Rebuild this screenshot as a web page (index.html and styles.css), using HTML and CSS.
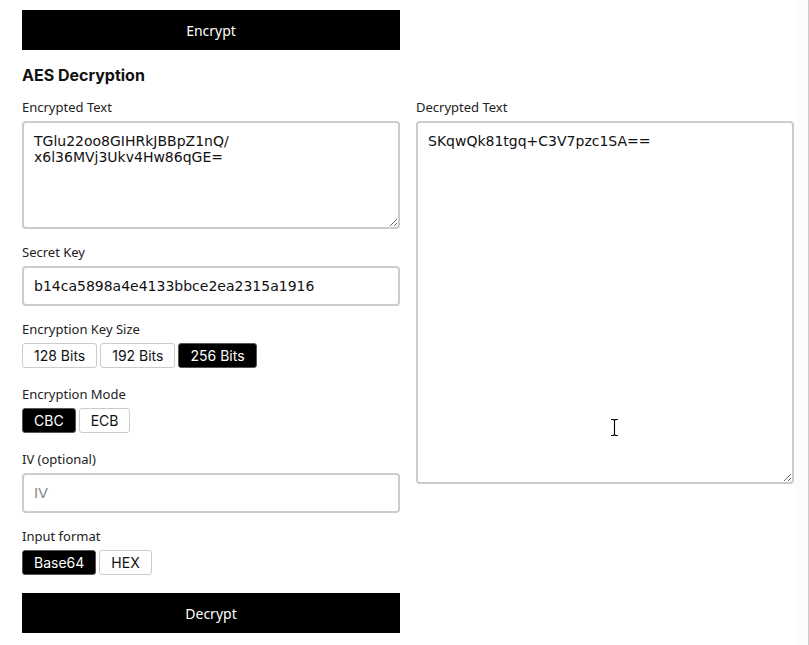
FILE: index.html
```html
<!DOCTYPE html>
<html>
<head>
<meta charset="utf-8">
<link rel="stylesheet" href="styles.css">
</head>
<body>
<div class="page">
  <button class="action">Encrypt</button>
  <h2 class="title">AES Decryption</h2>
  <div class="cols">
    <div class="col">
      <label class="lbl">Encrypted Text</label>
      <textarea class="area small">TGlu22oo8GIHRkJBBpZ1nQ/
x6l36MVj3Ukv4Hw86qGE=</textarea>
      <label class="lbl">Secret Key</label>
      <input class="field" value="b14ca5898a4e4133bbce2ea2315a1916">
      <label class="lbl">Encryption Key Size</label>
      <div class="group">
        <span class="opt">128 Bits</span><span class="opt">192 Bits</span><span class="opt on">256 Bits</span>
      </div>
      <label class="lbl">Encryption Mode</label>
      <div class="group">
        <span class="opt on">CBC</span><span class="opt">ECB</span>
      </div>
      <label class="lbl">IV (optional)</label>
      <input class="field" placeholder="IV">
      <label class="lbl">Input format</label>
      <div class="group last">
        <span class="opt on">Base64</span><span class="opt">HEX</span>
      </div>
      <button class="action">Decrypt</button>
    </div>
    <div class="col right">
      <label class="lbl">Decrypted Text</label>
      <textarea class="area big">SKqwQk81tgq+C3V7pzc1SA==</textarea>
      <svg class="cursor" width="9" height="19" viewBox="0 0 9 19"><path d="M1 1.5h2.5l1 1 1-1H8M4.5 2.5v14M1 17.5h2.5l1-1 1 1H8" fill="none" stroke="#fff" stroke-width="2.6"/><path d="M1 1.5h2.5l1 1 1-1H8M4.5 2.5v14M1 17.5h2.5l1-1 1 1H8" fill="none" stroke="#000" stroke-width="1.1"/></svg>
    </div>
  </div>
</div>
<div class="edge"></div>
</body>
</html>
```
FILE: styles.css
```css
html, body {
  margin: 0;
  padding: 0;
  background: #fff;
}
body {
  width: 809px;
  height: 645px;
  overflow: hidden;
  position: relative;
  font-family: "Noto Sans", "Open Sans", sans-serif;
  color: #111;
}
.page {
  padding: 10px 0 0 22px;
  width: 772px;
}
.action {
  display: block;
  width: 378px;
  height: 40px;
  border: 0;
  background: #000;
  color: #fff;
  font-family: "Noto Sans", sans-serif;
  font-size: 14px;
  padding: 0;
  margin: 0;
}
.title {
  font-family: Inter, "Noto Sans", sans-serif;
  font-weight: 700;
  font-size: 16px;
  margin: 14px 0 0 0;
  line-height: 22px;
  color: #111;
}
.cols {
  display: flex;
  gap: 16px;
  margin-top: 12px;
}
.col {
  width: 378px;
  display: flex;
  flex-direction: column;
}
.col.right {
  position: relative;
}
.lbl {
  display: block;
  font-size: 13px;
  line-height: 18px;
  color: #222;
  margin-bottom: 5px;
}
.area, .field {
  box-sizing: border-box;
  width: 378px;
  border: 2px solid #ccc;
  border-radius: 4px;
  font-family: "DejaVu Sans", sans-serif;
  font-size: 14px;
  color: #111;
  margin: 0;
  outline: none;
  background: #fff;
}
.area {
  padding: 10px 10px;
  line-height: 16px;
  resize: vertical;
  display: block;
}
.area.small {
  height: 108px;
  margin-bottom: 14px;
}
.area.big {
  height: 363px;
}
.field {
  height: 40px;
  padding: 0 10px;
  margin-bottom: 14px;
}
.field::placeholder {
  color: #888;
}
.group {
  display: flex;
  gap: 3px;
  margin-bottom: 17px;
}
.group.last {
  margin-bottom: 18px;
}
.opt {
  box-sizing: border-box;
  height: 25px;
  line-height: 23px;
  padding: 0 11px;
  border: 1px solid #ccc;
  border-radius: 3px;
  font-family: Inter, "Noto Sans", sans-serif;
  font-size: 14px;
  color: #111;
  background: #fff;
}
.opt.on {
  background: #000;
  color: #fff;
  border-color: #555;
}
.cursor {
  position: absolute;
  left: 194px;
  top: 320px;
}
.edge {
  position: absolute;
  top: 0;
  right: 0;
  width: 13px;
  height: 645px;
  background: #fcfcfc;
  border-right: 1px solid #ccc;
}
```
